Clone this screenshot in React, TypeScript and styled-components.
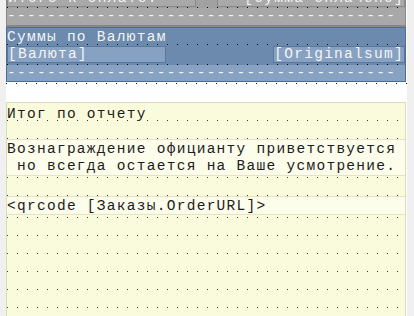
import React from "react";
import styled, { createGlobalStyle } from "styled-components";

const Global = createGlobalStyle`
  html, body { margin: 0; padding: 0; background: #f0f0f0; overflow: hidden; }
  #root { width: 414px; height: 316px; overflow: hidden; }
`;

const Screen = styled.div`
  width: 414px;
  height: 316px;
  overflow: hidden;
  background: #f0f0f0;
  display: flex;
  align-items: flex-start;
`;

const Canvas = styled.div`
  margin-left: 6px;
  margin-top: -12px;
  width: 401px;
  height: 340px;
  background: #ffffff;
  display: flex;
  flex-direction: column;
  font-family: "Liberation Mono", "Courier New", monospace;
  font-size: 14.5px;
  letter-spacing: 1.28px;
`;

const Band = styled.div<{ $bg: string; $border: string; $bottom?: number }>`
  box-sizing: border-box;
  width: 400px;
  background: ${(p) => p.$bg};
  border: 1px solid ${(p) => p.$border};
  border-bottom-width: ${(p) => p.$bottom ?? 1}px;
  display: flex;
  flex-direction: column;
`;

const Line = styled.div<{ $h: number; $dots?: string; $fill?: string }>`
  box-sizing: border-box;
  height: ${(p) => p.$h}px;
  flex: none;
  display: flex;
  align-items: flex-start;
  justify-content: flex-start;
  background-color: ${(p) => p.$fill ?? "transparent"};
  background-image: ${(p) =>
    p.$dots ? `linear-gradient(to right, ${p.$dots} 1px, transparent 1px)` : "none"};
  background-size: 10px 1px;
  background-repeat: repeat-x;
  background-position: 0 100%;
  overflow: hidden;
`;

const Text = styled.span<{ $color: string; $top?: number }>`
  color: ${(p) => p.$color};
  white-space: pre;
  line-height: 16px;
  padding-top: ${(p) => p.$top ?? 2}px;
`;

const Field = styled.div<{ $bg: string; $border: string; $color: string; $w?: number; $right?: boolean }>`
  box-sizing: border-box;
  height: 17px;
  margin-top: 1px;
  ${(p) => (p.$w ? `width: ${p.$w}px;` : "")}
  ${(p) => (p.$right ? "margin-left: auto;" : "")}
  background: ${(p) => p.$bg};
  border: 1px solid ${(p) => p.$border};
  color: ${(p) => p.$color};
  white-space: pre;
  line-height: 15px;
  display: flex;
  justify-content: ${(p) => (p.$right ? "flex-end" : "flex-start")};
`;

const Memo = styled.div<{ $h: number }>`
  box-sizing: border-box;
  flex: none;
  height: ${(p) => p.$h}px;
  border-top: 1px solid #e4e4c4;
  border-bottom: 1px solid #e4e4c4;
  background: #fdfdec;
  color: #1c1c1c;
  display: flex;
  flex-direction: column;
  white-space: pre;
  line-height: 17px;
  padding-top: 1px;
`;

const Gap = styled.div<{ $h: number }>`
  height: ${(p) => p.$h}px;
  flex: none;
`;

const Dash = "---------------------------------------";
const YDOT = "#3a3a30";

export default function App() {
  return (
    <>
      <Global />
      <Screen>
        <Canvas>
          <Band $bg="#a1a1a1" $border="#868686" $bottom={2}>
            <Line $h={19} $dots="#000">
              <Field $bg="#a9a9a9" $border="#8a8a8a" $color="#f2f2f2" $w={189}>
                Итого к оплате:
              </Field>
              <Field $bg="#a9a9a9" $border="#8a8a8a" $color="#f2f2f2" $w={188} $right>
                [Сумма оплачено]
              </Field>
            </Line>
            <Line $h={17} $fill="#a8a8a8">
              <Text $color="#f4f4f4" $top={0}>{Dash}</Text>
            </Line>
          </Band>
          <Band $bg="#6c8aad" $border="#4f6d91">
            <Line $h={17} $dots="#000">
              <Text $color="#f4f4f4" $top={1}>Суммы по Валютам</Text>
            </Line>
            <Line $h={20} $dots="#000">
              <Field $bg="#86a1c1" $border="#5a789b" $color="#f4f4f4" $w={159}>
                [Валюта]
              </Field>
              <Field $bg="#86a1c1" $border="#5a789b" $color="#f4f4f4" $right>
                [Originalsum]
              </Field>
            </Line>
            <Line $h={16} $fill="#87a2c2">
              <Text $color="#f4f4f4" $top={0}>{Dash}</Text>
            </Line>
          </Band>
          <Line $h={2} $dots="#000" />
          <Gap $h={18} />
          <Band $bg="#fafadc" $border="#dcdcb6">
            <Line $h={18} $dots={YDOT}>
              <Text $color="#1c1c1c" $top={3}>Итог по отчету</Text>
            </Line>
            <Line $h={18} $dots={YDOT} />
            <Memo $h={37}>
              <span>Вознаграждение официанту приветствуется</span>
              <span> но всегда остается на Ваше усмотрение.</span>
            </Memo>
            <Line $h={2} $dots={YDOT} />
            <Line $h={18} $dots={YDOT} />
            <Memo $h={19}>
              <span>{"<qrcode [Заказы.OrderURL]>"}</span>
            </Memo>
            <Line $h={3} $dots={YDOT} />
            <Line $h={18} $dots={YDOT} />
            <Line $h={18} $dots={YDOT} />
            <Line $h={18} $dots={YDOT} />
            <Line $h={18} $dots={YDOT} />
            <Line $h={18} $dots={YDOT} />
            <Line $h={18} $dots={YDOT} />
          </Band>
        </Canvas>
      </Screen>
    </>
  );
}
